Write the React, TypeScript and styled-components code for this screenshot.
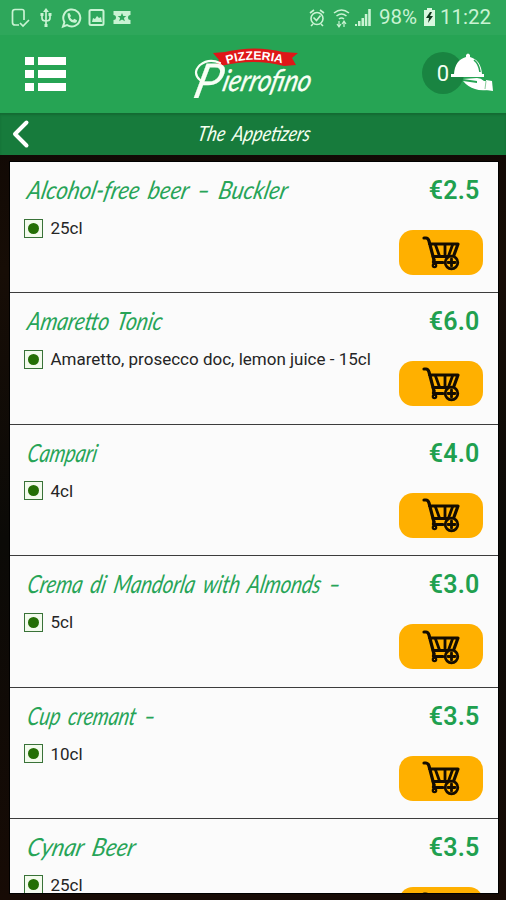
import React from "react";
import styled, { createGlobalStyle } from "styled-components";

const GlobalStyle = createGlobalStyle`
  * { box-sizing: border-box; }
  html, body { margin: 0; height: 100%; overflow: hidden; background: #0d0704; }
  body { font-family: Roboto, "Liberation Sans", sans-serif; }
  svg { display: block; flex: none; }
`;

const Screen = styled.div`
  display: flex;
  flex-direction: column;
  width: 506px;
  height: 900px;
  overflow: hidden;
  background: linear-gradient(#0b0503, #170d06 30%, #0b0a07 60%, #170b05);
`;

const StatusBar = styled.div`
  display: flex;
  flex: none;
  align-items: center;
  justify-content: space-between;
  height: 35px;
  padding: 0 12px 0 10px;
  background: #2ea75b;
  color: #c9f3d3;
`;

const StatusGroup = styled.div<{ $gap: number }>`
  display: flex;
  align-items: center;
  gap: ${(p) => p.$gap}px;
`;

const StatusText = styled.span<{ $width: number }>`
  width: ${(p) => p.$width}px;
  font-size: 20.5px;
  line-height: 35px;
  white-space: nowrap;
`;

const Header = styled.header`
  display: flex;
  flex: none;
  align-items: flex-start;
  height: 78px;
  padding: 0 13px 0 25px;
  background: #26a454;
`;

const MenuButton = styled.div`
  display: grid;
  flex: none;
  grid-template-columns: 9px 28px;
  grid-auto-rows: 8px;
  gap: 5px 4px;
  margin-top: 22px;
`;

const MenuBlock = styled.span`
  background: #fff;
`;

const Logo = styled.svg`
  margin: 9px 0 0 124px;
  overflow: visible;
`;

const Cart = styled.div`
  display: flex;
  width: 71px;
  height: 44px;
  margin: 17px 0 0 auto;
`;

const CartCount = styled.div`
  flex: none;
  width: 42px;
  height: 42px;
  border-radius: 50%;
  background: #198441;
  color: #f2fff2;
  font-size: 22px;
  line-height: 43px;
  text-align: center;
`;

const Cloche = styled.svg`
  margin-left: -13px;
`;

const TitleBar = styled.div`
  display: flex;
  flex: none;
  align-items: center;
  height: 42px;
  padding-left: 12px;
  background: #177b3c;
  box-shadow: inset 0 2px 2px #136b33;
`;

const ScriptText = styled.span<{ $size: number; $stretch: number }>`
  display: block;
  font-family: Lato, "Liberation Sans", sans-serif;
  font-style: italic;
  font-size: ${(p) => p.$size}px;
  line-height: 30px;
  word-spacing: 4px;
  white-space: nowrap;
  transform: scaleX(${(p) => p.$stretch}) skewX(-14deg);
  transform-origin: 0 70%;
`;

const PageTitle = styled.div`
  margin: 0 0 2px 167px;
  color: #f4fff0;
`;

const List = styled.main`
  flex: none;
  width: 488px;
  height: 731px;
  margin: 7px 0 0 9.5px;
  overflow: hidden;
  background: #fbfbfb;
  box-shadow: 0 0 0 1px #000;
`;

const Row = styled.article`
  display: flex;
  justify-content: space-between;
  height: 131.4px;
  padding: 12px 15px 0 14px;
  border-bottom: 1.4px solid #3c3c3c;
`;

const ItemInfo = styled.div`
  flex: 1;
  min-width: 0;
`;

const ItemTitle = styled.div`
  height: 30px;
  padding-left: 3px;
  color: #27a457;
`;

const Details = styled.div`
  display: flex;
  align-items: center;
  gap: 8px;
  height: 20px;
  margin-top: 14px;
  color: #252525;
  font-size: 17px;
  white-space: nowrap;
`;

const VegMark = styled.span`
  display: grid;
  place-items: center;
  width: 19px;
  height: 19px;
  border: 1.5px solid #397238;
  background: #f3fbed;
  &::before {
    content: "";
    width: 11px;
    height: 11px;
    border-radius: 50%;
    background: #246f05;
  }
`;

const Actions = styled.div`
  display: flex;
  flex: none;
  flex-direction: column;
  align-items: flex-end;
`;

const Price = styled.div`
  padding: 2px 3px 0 0;
  height: 56px;
  color: #20a04f;
  font-size: 25px;
  font-weight: 600;
  letter-spacing: 0.2px;
  line-height: 30px;
`;

const AddButton = styled.button`
  display: flex;
  align-items: center;
  justify-content: center;
  width: 84px;
  height: 45px;
  padding: 0;
  border: 0;
  border-radius: 14px;
  background: #ffb000;
`;

interface Item {
  name: string;
  stretch: number;
  detail: string;
  price: string;
}

const items: Item[] = [
  { name: "Alcohol-free beer – Buckler", stretch: 0.888, detail: "25cl", price: "€2.5" },
  { name: "Amaretto Tonic", stretch: 0.84, detail: "Amaretto, prosecco doc, lemon juice - 15cl", price: "€6.0" },
  { name: "Campari", stretch: 0.79, detail: "4cl", price: "€4.0" },
  { name: "Crema di Mandorla with Almonds –", stretch: 0.81, detail: "5cl", price: "€3.0" },
  { name: "Cup cremant –", stretch: 0.79, detail: "10cl", price: "€3.5" },
  { name: "Cynar Beer", stretch: 0.91, detail: "25cl", price: "€3.5" },
];

const LeftStatusIcons = () => (
  <svg width="121" height="22" viewBox="0 0 121 22" fill="none" stroke="currentColor" strokeWidth="1.7">
    <path d="M9 18H5q-2.500 0-2.500-2.500V5q0-2.500 2.500-2.500h7q2 0 2 2V13M10 16l3 3 6-6" />
    <path d="M36 4v15M32 8v3q0 3 4 3t4-3V8" />
    <path d="m36 1 3 4h-6zM30.500 6h3v3h-3zM38.500 6h3v3h-3zM34.500 17h3v3h-3z" fill="currentColor" stroke="none" />
    <path d="M53 19.500l1.400-4.300A8.500 8.500 0 1 1 57 18z" strokeWidth="2" />
    <path d="M57.500 6.500l2-.5 1.500 3-1 1.200q1 2 3 2.800l1.300-1.200 2.700 1.400q0 2.600-2.700 2.600-6.800-.8-6.800-9.300z" fill="currentColor" stroke="none" />
    <rect x="79.500" y="3" width="14" height="15" rx="1.500" strokeWidth="2" />
    <path d="m82 15 1-4 2 1 2-3 2 2 2-1 1 5z" fill="currentColor" stroke="none" />
    <path d="M103.500 4h17v4a2.500 2.500 0 0 0 0 5v4h-17v-4a2.500 2.500 0 0 0 0-5z" fill="currentColor" stroke="none" />
    <path d="m112 6 1.300 3h3l-2.400 2 1 3.200-2.900-1.800-2.900 1.800 1-3.200-2.400-2h3z" fill="#2ea75b" stroke="none" />
  </svg>
);

const RightStatusIcons = () => (
  <svg width="67" height="22" viewBox="0 0 67 22" fill="none" stroke="currentColor" strokeWidth="1.600">
    <circle cx="9" cy="11.500" r="6" />
    <path d="m5.500 10.500 3 3 4-5M2 6l4-3m6 0 4 3M5 17l-2 2m10-2 2 2" />
    <path d="M26 6q7.500-6 15 0M28.500 9q5-4 10 0M31 12q2.500-2 5 0" />
    <path d="M31 14v5m-2-2 2 3 2-3m3 3v-5m-2 2 2-3 2 3" strokeWidth="1.200" />
    <path d="M47 17h2v2h-2zm3-3h2.500v5H50zm3.500-3H56v8h-2.500zm3.300-4h2.500v12h-2.500zm3.400-5h2.600v17h-2.600z" fill="currentColor" stroke="none" />
  </svg>
);

const BatteryIcon = () => (
  <svg width="13" height="19" viewBox="0 0 13 19">
    <path d="M4 0h5v2h3v16H1V2h3z" fill="#d9f8df" />
    <path d="M7 4 3 10h3l-1 5 5-7H7l2-4z" fill="#103a1e" />
  </svg>
);

const BackIcon = () => (
  <svg width="18" height="30" viewBox="0 0 18 30">
    <path d="M14.500 3.500 3 15l11.500 11.500" fill="none" stroke="#fff" strokeWidth="4" strokeLinecap="round" strokeLinejoin="round" />
  </svg>
);

const Brand = () => (
  <Logo width="126" height="62" viewBox="0 0 126 62">
    <path d="m23 9 12-1q30-7 58 0l15 1-6 5 4 7-12 1Q63 14 31 22l-5-1 3-5z" fill="#df1718" />
    <path id="ribbon-line" d="M37 20q27-9 57 0" fill="none" />
    <text fill="#fff" fontFamily="Liberation Sans, sans-serif" fontSize="12" fontWeight="700">
      <textPath href="#ribbon-line" textLength="56" lengthAdjust="spacingAndGlyphs">PIZZERIA</textPath>
    </text>
    <path d="M10 36Q2 29 10 21q9-7 20-2" fill="none" stroke="#f8fff5" strokeWidth="2.200" strokeLinecap="round" />
    <g transform="skewX(-14)" fill="#f8fff5" stroke="#f8fff5" fontFamily="Lato, sans-serif" fontStyle="italic">
      <text x="15" y="54" fontSize="48" strokeWidth=".2" textLength="27" lengthAdjust="spacingAndGlyphs">P</text>
      <text x="43" y="47" fontSize="30" strokeWidth=".4" textLength="88" lengthAdjust="spacingAndGlyphs">ierrofino</text>
    </g>
  </Logo>
);

const ClocheIcon = () => (
  <Cloche width="44" height="42" viewBox="0 0 44 42">
    <path d="M3 22q1-14 12-17V3q2-3 4 0v2q11 3 12 17z" fill="#fff" />
    <path d="M23 8q5 4 6 12" stroke="#26a454" strokeWidth="1.600" fill="none" />
    <path d="M0 22h33v3H0zM12 27l14-1q4 0 7 3h4v9q-8 1-13-1-7-2-12-8l7 1 7 1v-2z" fill="#fff" />
    <path d="m35 28 6 1 1 10-7-1z" fill="#fff" />
    <path d="m35 29-1 8" stroke="#8acb9b" />
  </Cloche>
);

const AddToCartIcon = () => (
  <svg width="40" height="36" viewBox="0 0 40 36" fill="none" stroke="#140c00" strokeLinecap="round" strokeLinejoin="round">
    <path d="M3 3h2q2 0 3 3l5 19M8.500 9H37l-4 11" strokeWidth="3.200" />
    <path d="m14.500 10 4 11m5.500-11v11m7.500-11-4 11M12 21.500h15" strokeWidth="2.800" />
    <path d="M13 25q-2 4 2 2.500h7" strokeWidth="3" />
    <circle cx="13.500" cy="30.500" r="1.700" strokeWidth="2.200" />
    <circle cx="30.500" cy="27.500" r="6.300" fill="#ffb000" strokeWidth="2.800" />
    <path d="M30.500 24v7m-3.500-3.500h7" strokeWidth="2.800" />
  </svg>
);

const App = () => (
  <>
    <GlobalStyle />
    <Screen>
      <StatusBar>
        <LeftStatusIcons />
        <StatusGroup $gap={4}>
          <RightStatusIcons />
          <StatusText $width={40}>98%</StatusText>
          <BatteryIcon />
          <StatusText $width={54}>11:22</StatusText>
        </StatusGroup>
      </StatusBar>
      <Header>
        <MenuButton>
          {Array.from({ length: 6 }, (_, i) => (
            <MenuBlock key={i} />
          ))}
        </MenuButton>
        <Brand />
        <Cart>
          <CartCount>0</CartCount>
          <ClocheIcon />
        </Cart>
      </Header>
      <TitleBar>
        <BackIcon />
        <PageTitle>
          <ScriptText $size={21} $stretch={0.85}>The Appetizers</ScriptText>
        </PageTitle>
      </TitleBar>
      <List>
        {items.map((item) => (
          <Row key={item.name}>
            <ItemInfo>
              <ItemTitle>
                <ScriptText $size={25} $stretch={item.stretch}>{item.name}</ScriptText>
              </ItemTitle>
              <Details>
                <VegMark />
                {item.detail}
              </Details>
            </ItemInfo>
            <Actions>
              <Price>{item.price}</Price>
              <AddButton aria-label={`Add ${item.name}`}>
                <AddToCartIcon />
              </AddButton>
            </Actions>
          </Row>
        ))}
      </List>
    </Screen>
  </>
);

export default App;
